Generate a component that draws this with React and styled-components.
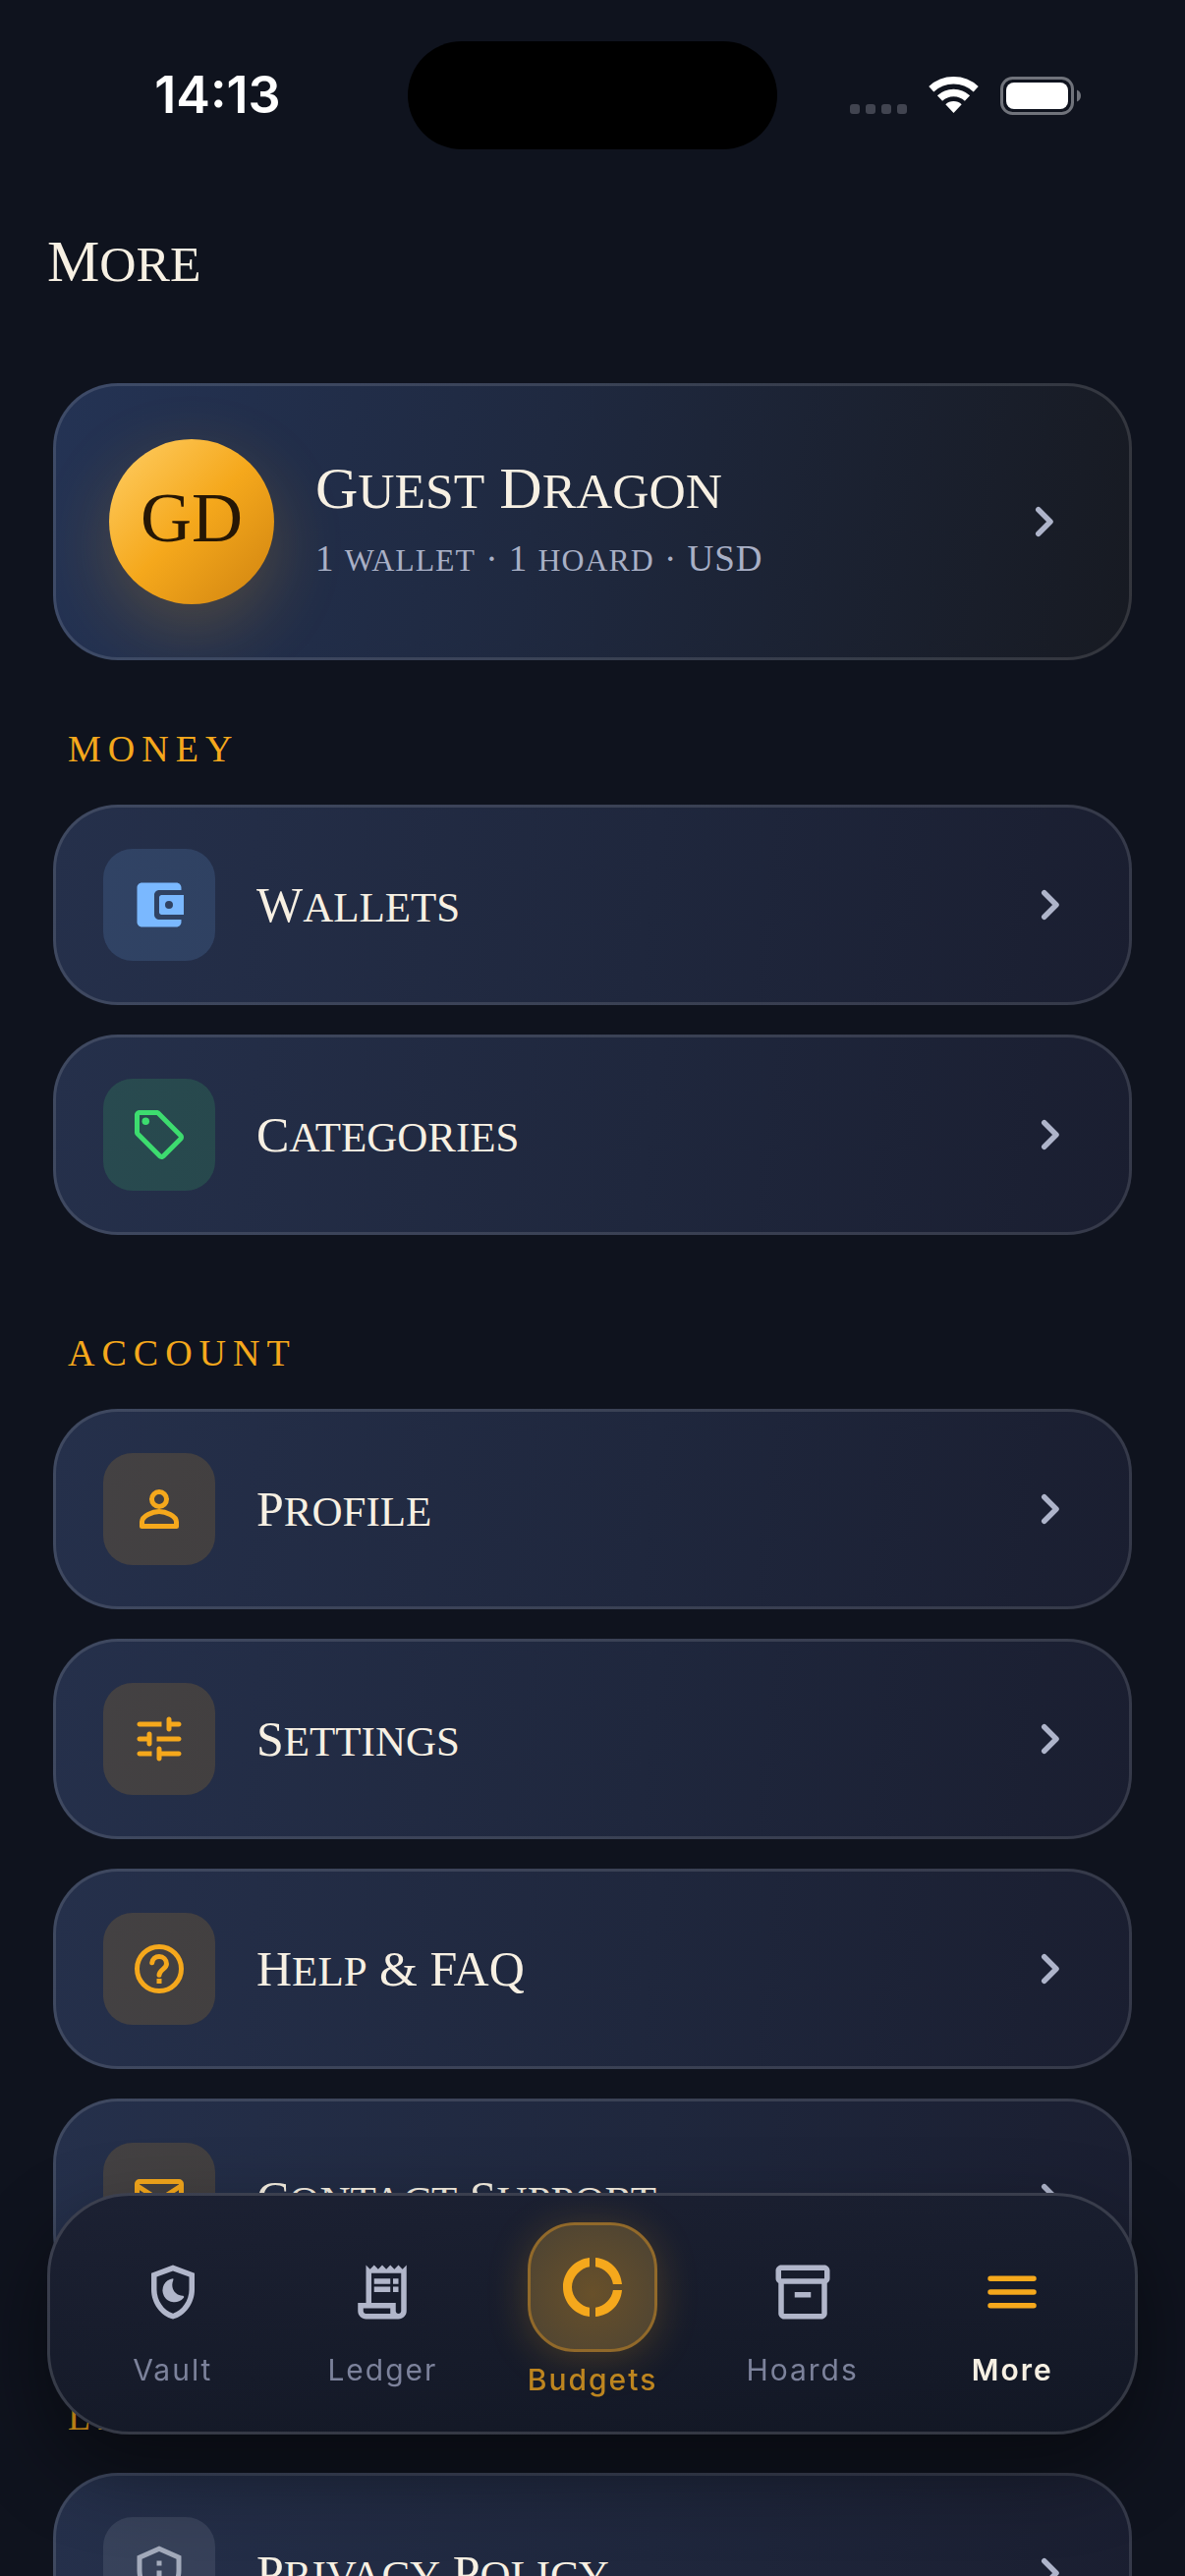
import { createGlobalStyle, styled, css } from "styled-components";
import {
  MdDonutLarge,
  MdOutlineLocalOffer,
  MdOutlinePrivacyTip,
  MdOutlineReceiptLong,
} from "react-icons/md";

const accents = {
  blue: { color: "#7ab8ff", background: "rgba(122, 184, 255, 0.15)" },
  green: { color: "#3ddc6f", background: "rgba(61, 220, 111, 0.16)" },
  amber: { color: "#f5a81c", background: "rgba(245, 168, 28, 0.15)" },
  grey: { color: "#a3aabb", background: "rgba(176, 182, 200, 0.14)" },
};

const sections = [
  {
    title: "MONEY",
    items: [
      { label: "Wallets", accent: "blue", Icon: WalletIcon },
      { label: "Categories", accent: "green", Icon: MdOutlineLocalOffer },
    ],
  },
  {
    title: "ACCOUNT",
    items: [
      { label: "Profile", accent: "amber", Icon: PersonIcon },
      { label: "Settings", accent: "amber", Icon: TuneIcon },
      { label: "Help & FAQ", accent: "amber", Icon: HelpIcon },
      { label: "Contact Support", accent: "amber", Icon: MailIcon },
    ],
  },
  {
    title: "LEGAL",
    items: [
      { label: "Privacy Policy", accent: "grey", Icon: MdOutlinePrivacyTip },
    ],
  },
];

const tabs = [
  { label: "Vault", Icon: ShieldMoonIcon },
  { label: "Ledger", Icon: MdOutlineReceiptLong },
  { label: "Budgets", Icon: MdDonutLarge, featured: true },
  { label: "Hoards", Icon: ChestIcon },
  { label: "More", Icon: MenuIcon, active: true },
];

export default function App() {
  return (
    <>
      <GlobalStyle />
      <Screen>
        <StatusBar>
          <Time>14:13</Time>
          <Island />
          <StatusIcons>
            <SignalIcon />
            <WifiIcon />
            <BatteryIcon />
          </StatusIcons>
        </StatusBar>
        <Title>
          <SmallCaps>More</SmallCaps>
        </Title>
        <Content>
          <ProfileCard type="button">
            <Avatar>GD</Avatar>
            <ProfileText>
              <ProfileName>
                <SmallCaps>Guest Dragon</SmallCaps>
              </ProfileName>
              <ProfileMeta>
                <SmallCaps>1 wallet · 1 hoard · USD</SmallCaps>
              </ProfileMeta>
            </ProfileText>
            <ChevronIcon />
          </ProfileCard>
          {sections.map(({ title, items }) => (
            <section key={title}>
              <SectionTitle>{title}</SectionTitle>
              <RowList>
                {items.map(({ label, accent, Icon }) => (
                  <li key={label}>
                    <Row type="button">
                      <IconTile $accent={accents[accent]}>
                        <Icon />
                      </IconTile>
                      <RowLabel>
                        <SmallCaps>{label}</SmallCaps>
                      </RowLabel>
                      <ChevronIcon />
                    </Row>
                  </li>
                ))}
              </RowList>
            </section>
          ))}
        </Content>
        <TabBar>
          {tabs.map(({ label, Icon, featured, active }) => (
            <Tab
              key={label}
              type="button"
              $featured={featured}
              $active={active}
              aria-current={active ? "page" : undefined}
            >
              {featured ? (
                <FeaturedIcon>
                  <Icon />
                </FeaturedIcon>
              ) : (
                <Icon />
              )}
              <TabLabel $featured={featured} $active={active}>
                {label}
              </TabLabel>
            </Tab>
          ))}
        </TabBar>
      </Screen>
    </>
  );
}

// Lowercase letters are set as capitals slightly smaller than the real ones
function SmallCaps({ children }) {
  return children
    .split(/([a-z]+)/)
    .map((part, index) =>
      index % 2 ? <SmallLetters key={index}>{part}</SmallLetters> : part
    );
}

function ChevronIcon() {
  return (
    <Chevron viewBox="0 0 24 24" aria-hidden="true">
      <path d="M8.7 7.1 13.6 12l-4.9 4.9" />
    </Chevron>
  );
}

function WalletIcon() {
  return (
    <svg viewBox="0 0 24 24" fill="currentColor" aria-hidden="true">
      <path d="M10 16V8c0-1.100.890-2 2-2h9V5c0-1.100-.9-2-2-2H5c-1.110 0-2 .9-2 2v14c0 1.100.890 2 2 2h14c1.100 0 2-.9 2-2v-1h-9c-1.110 0-2-.9-2-2z" />
      <path
        fillRule="evenodd"
        d="M13 8c-.55 0-1 .45-1 1v6c0 .55.45 1 1 1h9V8zm3 5.600a1.600 1.600 0 1 1 0-3.200 1.600 1.600 0 0 1 0 3.200z"
      />
    </svg>
  );
}

function PersonIcon() {
  return (
    <LineIcon viewBox="0 0 24 24" aria-hidden="true">
      <circle cx="12" cy="8" r="3" />
      <path d="M5 17.2c0-2.5 4.4-4.2 7-4.2s7 1.7 7 4.2V19H5z" />
    </LineIcon>
  );
}

function TuneIcon() {
  return (
    <svg viewBox="0 0 24 24" fill="currentColor" aria-hidden="true">
      <path d="M3 18c0 .55.45 1 1 1h5v-2H4c-.55 0-1 .45-1 1zM3 6c0 .55.45 1 1 1h9V5H4c-.55 0-1 .45-1 1zm10 14v-1h7c.55 0 1-.45 1-1s-.45-1-1-1h-7v-1c0-.55-.45-1-1-1s-1 .45-1 1v4c0 .55.45 1 1 1s1-.45 1-1zM7 10v1H4c-.55 0-1 .45-1 1s.45 1 1 1h3v1c0 .55.45 1 1 1s1-.45 1-1v-4c0-.55-.45-1-1-1s-1 .45-1 1zm14 2c0-.55-.45-1-1-1h-9v2h9c.55 0 1-.45 1-1zm-5-3c.55 0 1-.45 1-1V7h3c.55 0 1-.45 1-1s-.45-1-1-1h-3V4c0-.55-.45-1-1-1s-1 .45-1 1v4c0 .55.45 1 1 1z" />
    </svg>
  );
}

function HelpIcon() {
  return (
    <LineIcon viewBox="0 0 24 24" aria-hidden="true">
      <circle cx="12" cy="12" r="9" />
      <path d="M9.100 9.500C9.300 8 10.500 7 12 7c1.700 0 3 1.300 3 3 0 2-3 2.300-3 4.500" />
      <path d="M11 17h2" strokeLinecap="butt" />
    </LineIcon>
  );
}

function MailIcon() {
  return (
    <LineIcon viewBox="0 0 24 24" aria-hidden="true">
      <rect x="3" y="5" width="18" height="14" rx="1" />
      <path d="m3.5 7 8.5 5.500L20.5 7" />
    </LineIcon>
  );
}

function ShieldMoonIcon() {
  return (
    <svg viewBox="0 0 24 24" fill="currentColor" aria-hidden="true">
      <path d="M12 2 4 5v6.090c0 5.050 3.410 9.760 8 10.910 4.590-1.150 8-5.860 8-10.910V5l-8-3zm6 9.090c0 4-2.550 7.700-6 8.830-3.450-1.130-6-4.820-6-8.830v-4.700l6-2.250 6 2.250v4.700z" />
      <path d="M12 7a4.400 4.400 0 1 0 4 7.100c.2-.3 0-.7-.4-.7-3.100-.2-4.600-3.100-3.500-5.800.1-.3.1-.6-.1-.6z" />
    </svg>
  );
}

function ChestIcon() {
  return (
    <svg viewBox="0 0 24 24" fill="currentColor" aria-hidden="true">
      <path
        fillRule="evenodd"
        d="M20 2H4c-1 0-2 1-2 2v3c0 .7.400 1.300 1 1.700V20c0 1 1.100 2 2 2h14c.9 0 2-1 2-2V8.700c.6-.4 1-1 1-1.700V4c0-1-1-2-2-2zm-1 18H5V9h14zm1-13H4V4h16z"
      />
      <path d="M9 12h6v2H9z" />
    </svg>
  );
}

function MenuIcon() {
  return (
    <LineIcon viewBox="0 0 24 24" aria-hidden="true">
      <path d="M4 7h16M4 12h16M4 17h16" />
    </LineIcon>
  );
}

function SignalIcon() {
  return (
    <svg width="58" height="38" viewBox="0 0 58 38" aria-hidden="true">
      <g fill="#414450">
        <rect x="0" y="28" width="10" height="10" rx="3" />
        <rect x="16" y="28" width="10" height="10" rx="3" />
        <rect x="32" y="28" width="10" height="10" rx="3" />
        <rect x="48" y="28" width="10" height="10" rx="3" />
      </g>
    </svg>
  );
}

function WifiIcon() {
  return (
    <svg width="51" height="38" viewBox="0 0 51 38" aria-hidden="true">
      <g fill="none" stroke="#ffffff">
        <path d="M2.8 12.7a33.3 33.3 0 0 1 45.4 0" strokeWidth="7.4" />
        <path d="M11.5 22a20.5 20.5 0 0 1 28 0" strokeWidth="7.6" />
      </g>
      <path d="M25.5 37l-8.2-8.8a12 12 0 0 1 16.4 0z" fill="#ffffff" />
    </svg>
  );
}

function BatteryIcon() {
  return (
    <svg width="82" height="39" viewBox="0 0 82 39" aria-hidden="true">
      <rect
        x="1.5"
        y="1.5"
        width="72"
        height="36"
        rx="11"
        fill="none"
        stroke="#70737b"
        strokeWidth="3"
      />
      <rect x="6" y="6" width="63" height="27" rx="8" fill="#ffffff" />
      <path d="M78 13.5c2.5 1 4 3.3 4 6s-1.5 5-4 6z" fill="#70737b" />
    </svg>
  );
}

const GlobalStyle = createGlobalStyle`
  * {
    box-sizing: border-box;
  }

  body {
    margin: 0;
    background-color: #0f131e;
  }

  button {
    border: none;
    padding: 0;
    font: inherit;
    color: inherit;
    text-align: left;
    cursor: pointer;
  }
`;

const Screen = styled.main`
  height: 100vh;
  overflow: hidden;
  background-color: #0f131e;
  color: #f7f0e3;
  font-family: "Liberation Serif", serif;
`;

const StatusBar = styled.header`
  display: grid;
  grid-template-columns: 1fr auto 1fr;
  align-items: center;
  height: 194px;
  color: #ffffff;
`;

const Time = styled.time`
  justify-self: center;
  padding-left: 28px;
  font: 600 52px/60px Inter, sans-serif;
`;

const Island = styled.div`
  width: 376px;
  height: 110px;
  border-radius: 55px;
  background-color: #000000;
`;

const StatusIcons = styled.div`
  display: flex;
  justify-content: flex-end;
  align-items: center;
  gap: 22px;
  padding-right: 106px;
`;

const Title = styled.h1`
  margin: 0;
  padding: 36px 48px 0;
  font-size: 60px;
  line-height: 72px;
  font-weight: 400;
`;

const SmallLetters = styled.span`
  font-size: 86%;
  line-height: 0;
  text-transform: uppercase;
`;

const Content = styled.div`
  padding: 88px 54px 0;
`;

const cardFrame = css`
  display: flex;
  align-items: center;
  gap: 42px;
  width: 100%;
  overflow: hidden;
  border: 3px solid rgba(255, 255, 255, 0.12);
  border-radius: 66px;
  background-origin: border-box;
`;

const ProfileCard = styled.button`
  ${cardFrame}
  padding: 54px;
  background-image: linear-gradient(100deg, #243354, #1f2940 45%, #171a22);
`;

const Avatar = styled.span`
  display: grid;
  place-items: center;
  flex: none;
  width: 168px;
  height: 168px;
  padding-bottom: 8px;
  border-radius: 50%;
  background-image: linear-gradient(135deg, #ffcf66, #f5a81c 50%, #cf8310);
  box-shadow: 0 24px 72px rgba(245, 168, 28, 0.22);
  color: #261705;
  font-size: 72px;
  line-height: 80px;
`;

const ProfileText = styled.span`
  display: flex;
  flex-direction: column;
  flex: 1;
  gap: 12px;
  padding-bottom: 8px;
`;

const ProfileName = styled.span`
  font-size: 60px;
  line-height: 72px;
`;

const ProfileMeta = styled.span`
  color: #a9b0c6;
  font-size: 37px;
  line-height: 48px;
  letter-spacing: 1px;
`;

const Chevron = styled.svg`
  flex: none;
  width: 60px;
  height: 60px;
  fill: none;
  stroke: #aeb4ca;
  stroke-width: 2.2;
  stroke-linecap: round;
  stroke-linejoin: round;
`;

const SectionTitle = styled.h2`
  margin: 0;
  padding: 66px 15px 32px;
  color: #f5a81c;
  font-size: 38px;
  line-height: 49px;
  font-weight: 400;
  letter-spacing: 7px;
`;

const RowList = styled.ul`
  margin: 0;
  padding: 0;
  list-style: none;

  li {
    padding-bottom: 30px;
  }
`;

const Row = styled.button`
  ${cardFrame}
  padding: 42px 48px;
  background-image: linear-gradient(98deg, #25304b, #1f273d 55%, #1a1e30);
`;

const IconTile = styled.span`
  display: grid;
  place-items: center;
  flex: none;
  width: 114px;
  height: 114px;
  border-radius: 30px;
  color: ${(props) => props.$accent.color};
  background-color: ${(props) => props.$accent.background};

  svg {
    width: 60px;
    height: 60px;
  }
`;

const RowLabel = styled.span`
  flex: 1;
  font-size: 50px;
  line-height: 60px;
`;

const LineIcon = styled.svg`
  fill: none;
  stroke: currentColor;
  stroke-width: 2;
  stroke-linecap: round;
  stroke-linejoin: round;
`;

const TabBar = styled.nav`
  position: fixed;
  right: 48px;
  bottom: 144px;
  left: 48px;
  display: grid;
  grid-template-columns: repeat(5, 1fr);
  padding: 27px 18px 35px;
  border: 3px solid rgba(255, 255, 255, 0.14);
  border-radius: 84px;
  background: linear-gradient(175deg, #1c2133, #121724) border-box;
  box-shadow: 0 36px 84px rgba(0, 0, 0, 0.45);
`;

const Tab = styled.button`
  display: flex;
  flex-direction: column;
  align-items: center;
  gap: ${(props) => (props.$featured ? "10px" : "28px")};
  padding-top: ${(props) => (props.$featured ? "0" : "38px")};
  background: none;
  color: ${(props) => (props.$active ? "#f5a81c" : "#b1b6ca")};

  > svg {
    width: 66px;
    height: 66px;
  }
`;

const FeaturedIcon = styled.span`
  display: grid;
  place-items: center;
  width: 132px;
  height: 132px;
  border: 3px solid #91692a;
  border-radius: 48px;
  background: radial-gradient(circle at 50% 55%, #68502a, #4a4234);
  box-shadow: 0 6px 42px rgba(245, 168, 28, 0.22);
  color: #f5a81c;

  svg {
    width: 72px;
    height: 72px;
  }
`;

const TabLabel = styled.span`
  font-family: Inter, sans-serif;
  font-size: 30px;
  line-height: 36px;
  letter-spacing: 2px;
  font-weight: 400;
  color: #7c829b;
  ${(props) =>
    props.$featured &&
    css`
      color: #bd851f;
      font-weight: 500;
    `}
  ${(props) =>
    props.$active &&
    css`
      color: #f7f0e3;
      font-weight: 600;
    `}
`;
